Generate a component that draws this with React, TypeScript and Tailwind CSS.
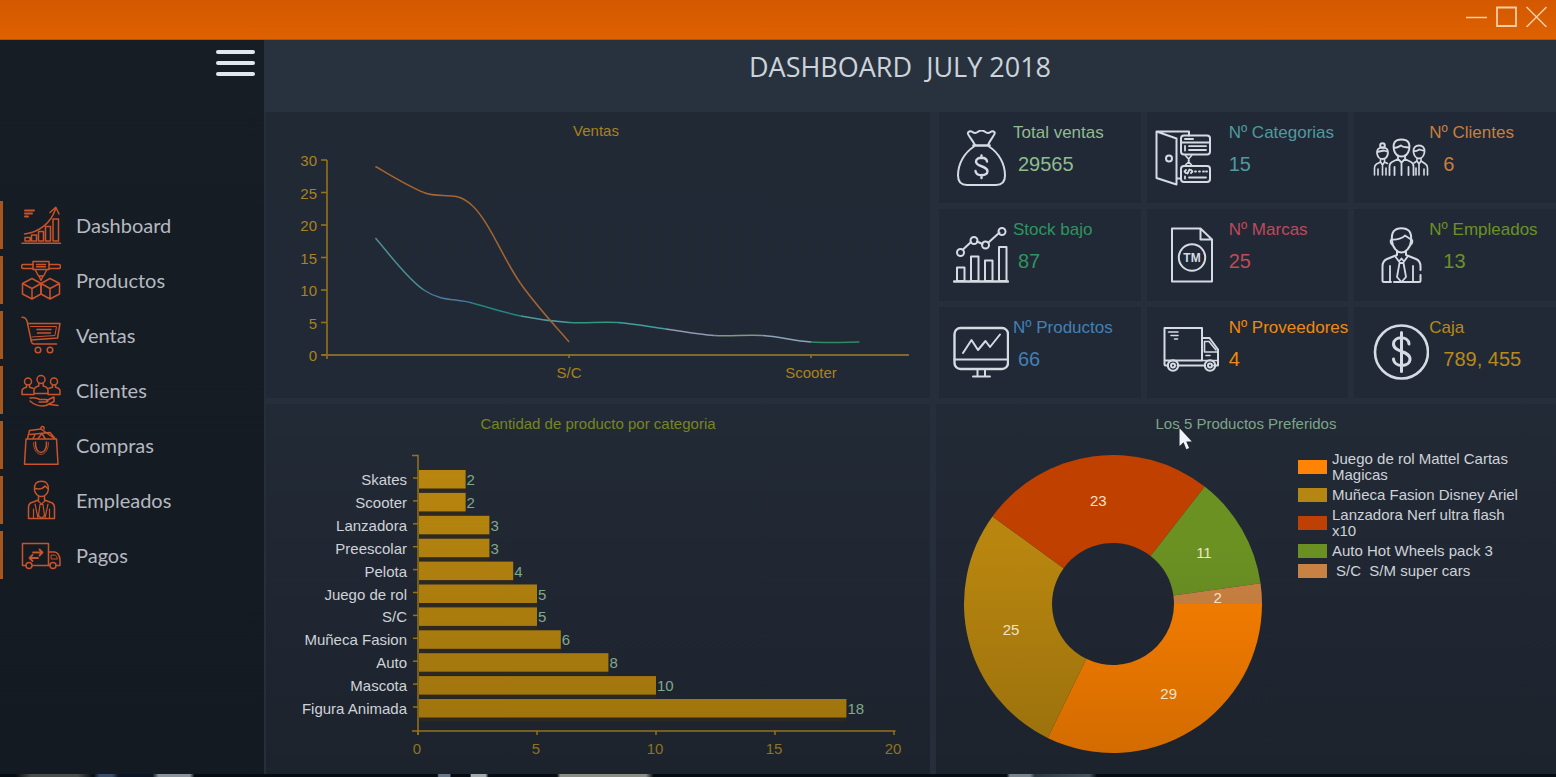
import type { ReactNode } from 'react';

type Point = [number, number];

/* ---------- Sidebar icons ---------- */

function NavIcon({ children }: { children: ReactNode }) {
  return (
    <svg
      viewBox="0 0 40 40"
      className="h-10 w-10 shrink-0"
      fill="none"
      stroke="#c9532a"
      strokeWidth="1.5"
      strokeLinejoin="round"
      strokeLinecap="round"
      aria-hidden="true"
    >
      {children}
    </svg>
  );
}

const navItems: { label: string; icon: ReactNode }[] = [
  {
    label: 'Dashboard',
    icon: (
      <>
        <path d="M1 38.2H40" />
        <path d="M4 36v-3.5h5V36zM10.5 36v-6h5v6zM17.5 36V26.500h5V36zM24.500 36V21.500h5V36zM32 36V14h5.500v22z" />
        <path d="M3.500 29C18 27.500 30 18 34.500 4" />
        <path d="M29 7.500L34.800 2.200L38 9" />
        <path d="M4 5.500h9M4 8.500h7M4 11.500h3" strokeWidth="2" />
      </>
    ),
  },
  {
    label: 'Productos',
    icon: (
      <>
        <path d="M12 4.500H2.500a1.800 1.800 0 0 0 0 4H12M28 4.500h9.500a1.800 1.800 0 0 1 0 4H28" />
        <path d="M12 1.500h16v8H12zM15.500 4.500h9M15.500 6.800h9" />
        <path d="M14 9.500l3.500 6.500h5L26 9.500M18 16l2 4.500l2-4.500" />
        <path d="M1.500 23.500L11 18.500L20 23.500V34L11 39L1.500 34zM1.500 23.500L11 28.500L20 23.500M11 28.500V39" />
        <path d="M38.500 23.500L29 18.500L20 23.500V34L29 39L38.500 34zM38.500 23.500L29 28.500L20 23.500M29 28.500V39" />
      </>
    ),
  },
  {
    label: 'Ventas',
    icon: (
      <>
        <path d="M1 2.200C4 2.200 5 3 6 6L10.500 27C11 28.500 11.500 29 13 29H35.500" />
        <path d="M6.800 8.500H39L36.500 23L10 25" />
        <path d="M9.500 11.500H35.500L34 20.500L11 22" strokeWidth="1" />
        <path d="M16 14.500H30M16.500 18H29.500" strokeWidth="1.600" />
        <circle cx="17" cy="35" r="2.800" />
        <circle cx="29" cy="35" r="2.800" />
      </>
    ),
  },
  {
    label: 'Clientes',
    icon: (
      <>
        <circle cx="20" cy="9.500" r="4" />
        <path d="M17.800 13v3C14 17 13 18 13 20v3.500h14V20c0-2-1-3-4.800-4v-3" />
        <circle cx="7" cy="11.500" r="3.500" />
        <path d="M5.500 14.800v2.500C2 18.300 1 19.300 1 21v3.500h12M8.500 14.800v2.500l3.500 1" />
        <circle cx="33" cy="11.500" r="3.500" />
        <path d="M34.500 14.800v2.500C38 18.300 39 19.300 39 21v3.500H27M31.500 14.800v2.500l-3.500 1" />
        <path d="M9 28c5-.500 7 0 10 1.500h6.500c2 0 2 2.500 0 2.500H18M25.500 30.500L33 27v4.500L25 35.500c-7 1.500-12-1-16-4.500M29 34.500l8 1" />
      </>
    ),
  },
  {
    label: 'Compras',
    icon: (
      <>
        <path d="M5 14H35.500L37 39.200H3.500z" />
        <path d="M14.500 17c-1 14 12 14 11 0" />
        <path d="M12.500 17.500c0 16 15 16 15 0" strokeWidth="0.800" />
        <path d="M6.500 13.500L8.500 5.500L20 4L33.500 13.500M9 9.500l20-2l5 6M20 4c-1-3.500 4-3 3 0" />
        <path d="M12 13.500l2-4M17 13.500l4-5l3 5" />
      </>
    ),
  },
  {
    label: 'Empleados',
    icon: (
      <>
        <path d="M13.500 10C13 4 15.500 1.200 20.500 1.200S27.800 4 27.300 10C26.800 14 23.500 16.500 20.400 16.500S14 14 13.500 10z" />
        <path d="M13.800 8.500C18 9.500 22 8.500 24 6l3 2.800" />
        <path d="M17.500 16v4L9.500 23C7.800 24 7.500 26 7.500 28V38.500H33.500V28c0-2-.5-4-2.200-5L23.500 20v-4" />
        <path d="M16.500 20.500l4 3.500l4-3.500M19 24.500h3l1.500 11l-3 3l-3-3zM12.500 29v9.500M28.500 29v9.500M14 24l3 14M27 24l-3 14" strokeWidth="1.200" />
      </>
    ),
  },
  {
    label: 'Pagos',
    icon: (
      <>
        <path d="M4.500 30.500H1.500V8.500H27.500V30.500H11.500" />
        <path d="M27.500 17h6c3 0 5.500 4 5.500 8v5.500h-3.500M28.500 30.500h-1" />
        <path d="M30.500 20h3c1.500 0 2.500 2 3 4h-6z" strokeWidth="1" />
        <circle cx="8" cy="30.500" r="3" />
        <circle cx="32" cy="30.500" r="3" />
        <path d="M12 17.500h9M18.500 14.500l3 3l-3 3M17 23H8.500M11.500 20l-3 3l3 3" strokeWidth="1.800" />
      </>
    ),
  },
];

/* ---------- Stat icons ---------- */

function StatIcon({ children }: { children: ReactNode }) {
  return (
    <svg
      viewBox="0 0 56 56"
      className="h-14 w-14 shrink-0"
      fill="none"
      stroke="#d5dbe3"
      strokeWidth="2"
      strokeLinejoin="round"
      strokeLinecap="round"
      aria-hidden="true"
    >
      {children}
    </svg>
  );
}

const moneyBag = (
  <>
    <path d="M22 15C19 9.500 16 6.500 15 4C14.500 1.500 17.500 .5 19.500 2C21.500 3.500 23.500 3 25 1.800C27 .2 30 .2 32 1.800C33.500 3 35.500 3.500 37.500 2C39.500 .5 42.500 1.500 41.500 4C40.500 6.500 37.500 9.500 35 15" />
    <path d="M20.500 15.500H36.500" strokeWidth="2.600" />
    <path d="M21 16.500C11 23 5 34 5 45.500C5 52 8 55 14 55H43C49 55 52 52 52 45.500C52 34 46 23 36 16.500" />
    <path d="M34 31.500C33.500 26.500 23 26.500 23 31.800C23 37 34.500 35.500 34.500 41.300C34.500 46.800 23 46.500 22.500 41M28.500 25.500V28M28.500 45V48" strokeWidth="2.400" />
  </>
);

const doorCards = (
  <>
    <path d="M1.500 1.500L21.500 8.500V54.500L1.500 48zM1.500 1.500H34V5.500M21.500 48.500H26" />
    <circle cx="14" cy="28.500" r="3" />
    <rect x="26" y="5.500" width="29" height="19" rx="3" />
    <path d="M26 12.500H55M30 9h8" />
    <path d="M30 16v4.500M34 16.200H51M34 20H51" strokeWidth="1.800" />
    <path d="M30 24.500c1 3 4 3 4 6s-3 2.500-4 5.500M37 24.500c-1 3-3.500 3-3.500 6s2.500 2.500 3.500 5.500" strokeWidth="1.600" />
    <rect x="26" y="36" width="29" height="16" rx="3" />
    <path d="M31 40l-1.500 1.500L31 43M36 40l1.500 1.500L36 43M34.500 39.500l-2 4M40 41.500h1M44 41.500h1M48 41.500h1M51 41.500h1M30 46.500v2M34 47.500H51" strokeWidth="1.800" />
  </>
);

const peopleGroup = (
  <>
    <path d="M21 20C19.500 13 22 9.500 28.500 9.500S37.500 13 36 20C35 24 32 26.500 28.500 26.500S22 24 21 20zM21 17.500C25 18.500 27 15.500 28 15.500C30 18 33 17 36 17.500" />
    <path d="M25 25.500v3.500L19 32C17 33 16.500 34 16.500 36.500V45M32 25.500v3.500L38 32c2 1 2.500 2 2.500 4.500V45M25 29l3.500 3.500L32 29M28.500 32.500V45M21.500 37v8M35.500 37v8" strokeWidth="1.800" />
    <circle cx="9.500" cy="15.500" r="2.300" />
    <path d="M4 23C3.500 19.500 6 17.500 9.500 17.500S15.500 19.500 15 23C14.500 27 12 29 9.500 29S4.500 27 4 23zM4 22l7-1.500l4 1.500" strokeWidth="1.800" />
    <path d="M7.500 29v3L3.500 34C2 35 1.500 36 1.500 38v7M11.500 29v3l3 1.500M7.500 32l2 3l2-3M9.500 35v10M5 39v6M13 38v7" strokeWidth="1.600" />
    <path d="M40.500 22C40 17.500 42.500 15.500 46 15.500S52 17.500 51.500 22C51 26 48.500 28.500 46 28.500S41 26 40.500 22zM40.500 21c4 .5 5-1.500 6-1.500l5 1.500" strokeWidth="1.800" />
    <path d="M44 28.500V31l-3 2M48 28.500V31l4.500 3c1.500 1 2 2 2 4v7M44 31l2 3l2-3M46 34v11M43 38v7M51 39v6" strokeWidth="1.600" />
  </>
);

const barTrend = (
  <>
    <path d="M1 54.500H55" strokeWidth="2.400" />
    <path d="M4 54V40.500h7.500V54zM18 54V29.500h7.500V54zM32 54V33.500h7.500V54zM46 54V20h7.500V54z" />
    <path d="M10 22.500l8-7.500M24 14.500l5.500 2.500M35.500 15.500l11-10" />
    <circle cx="7.500" cy="25.500" r="3.500" />
    <circle cx="21" cy="13.500" r="3.500" />
    <circle cx="32.500" cy="18" r="3.500" />
    <circle cx="49" cy="4.500" r="3.500" />
  </>
);

const trademarkFile = (
  <>
    <path d="M9 1.500H37.500L49 12.500V54.500H9zM37.500 1.500V12.500H49" />
    <circle cx="29" cy="30.500" r="13.200" />
    <text
      x="29"
      y="35"
      textAnchor="middle"
      fill="#d5dbe3"
      stroke="none"
      className="font-['Liberation_Sans',sans-serif] text-[12px] font-bold"
    >
      TM
    </text>
  </>
);

const employee = (
  <>
    <path d="M19 14C18 5 21.500 1.200 28.500 1.200S39 5 38 14C37.500 21 32.500 25.500 28.500 25.500S19.500 21 19 14z" />
    <path d="M19 12.500C24 13 30 11 32 8.500L38 12.500M18.500 12.500c-1.500 1-1 4 .5 5M38.500 12.500c1.500 1 1 4-.5 5" strokeWidth="1.800" />
    <path d="M24 24v4L14 32C10.500 33.500 9.500 36 9.500 39.500V53.500c0 1 .5 1.500 1.500 1.500H18M33 24v4l10 4c3.500 1.500 4.500 4 4.500 7.500V43M47.500 48v5.500c0 1-.5 1.500-1.500 1.500H21" />
    <path d="M22 29l4 5.500l2.500-3l2.500 3l4-5.500M26.500 36h4l2.500 14l-4.500 5l-4.500-5zM17 39v15.500M40 39v15.500" strokeWidth="1.800" />
  </>
);

const monitor = (
  <>
    <rect x="1.500" y="4" width="53.500" height="41" rx="6" strokeWidth="2.400" />
    <path d="M1.500 35.500H55" />
    <path d="M10 29L18.500 16L25 26L32.500 17L37 23L47 10.500" />
    <path d="M24.500 45v6.500M32 45v6.500M20 52.500H37" />
  </>
);

const truck = (
  <>
    <path d="M5 41.500H2.500C1.800 41.500 1.500 41 1.500 40.500V4H39V36.500H1.500M14.500 41.500H42M39 14H46.500L55 25.500V41.500H51" />
    <path d="M41.500 17.500V28H54.500M41.500 17.500h4.500l7 8.500M39 36.500H55M43 31.500h4M5.500 8H15M8 11.500h7M11.500 15h3" strokeWidth="1.600" />
    <circle cx="10" cy="41.500" r="5.200" />
    <circle cx="10" cy="41.500" r="2" />
    <circle cx="47" cy="41.500" r="5.200" />
    <circle cx="47" cy="41.500" r="2" />
  </>
);

const coin = (
  <>
    <circle cx="28.500" cy="28" r="26.500" strokeWidth="2.600" />
    <path d="M36 20C35.500 11.500 20.500 12 20.500 20C20.500 28.500 37 26.500 37 35C37 43.500 21 43.500 20.500 35M28.500 8.500V47.500" strokeWidth="3" />
  </>
);

interface Stat {
  label: string;
  value: string;
  color: string;
  icon: ReactNode;
  pad: string;
  gap: string;
  indent: string;
}

const stats: Stat[] = [
  { label: 'Total ventas', value: '29565', color: 'text-[#8fbc8f]', icon: moneyBag, pad: 'pl-[14px]', gap: 'gap-1', indent: 'pl-[5px]' },
  { label: 'Nº Categorias', value: '15', color: 'text-[#4f9a9f]', icon: doorCards, pad: 'pl-2', gap: 'gap-[18px]', indent: '' },
  { label: 'Nº Clientes', value: '6', color: 'text-[#c87f3d]', icon: peopleGroup, pad: 'pl-[19px]', gap: '', indent: 'pl-[14px]' },
  { label: 'Stock bajo', value: '87', color: 'text-[#2f9460]', icon: barTrend, pad: 'pl-[14px]', gap: 'gap-1', indent: 'pl-[5px]' },
  { label: 'Nº Marcas', value: '25', color: 'text-[#bf4a5a]', icon: trademarkFile, pad: 'pl-4', gap: 'gap-[10px]', indent: '' },
  { label: 'Nº Empleados', value: '13', color: 'text-[#6b9126]', icon: employee, pad: 'pl-[19px]', gap: '', indent: 'pl-[14px]' },
  { label: 'Nº Productos', value: '66', color: 'text-[#4480b4]', icon: monitor, pad: 'pl-[14px]', gap: 'gap-1', indent: 'pl-[5px]' },
  { label: 'Nº Proveedores', value: '4', color: 'text-[#f08a0c]', icon: truck, pad: 'pl-4', gap: 'gap-[10px]', indent: '' },
  { label: 'Caja', value: '789, 455', color: 'text-[#b8891a]', icon: coin, pad: 'pl-[19px]', gap: '', indent: 'pl-[14px]' },
];

function StatTile({ stat }: { stat: Stat }) {
  return (
    <div className={`flex bg-[#212936] ${stat.pad} ${stat.gap}`}>
      <div className="flex items-center">
        <StatIcon>{stat.icon}</StatIcon>
      </div>
      <dl className={`pt-[11px] whitespace-nowrap ${stat.color}`}>
        <dt className="text-[17px] leading-5">{stat.label}</dt>
        <dd className={`mt-[9px] text-[20px] leading-6 ${stat.indent}`}>{stat.value}</dd>
      </dl>
    </div>
  );
}

/* ---------- Line chart ---------- */

const SPLINE = 0.18;

function splineSegments(points: Point[]): string[] {
  return points.slice(0, -1).map((p, i) => {
    const prev = points[i - 1] ?? p;
    const next = points[i + 1];
    const after = points[i + 2] ?? next;
    const c1: Point = [p[0] + (next[0] - prev[0]) * SPLINE, p[1] + (next[1] - prev[1]) * SPLINE];
    const c2: Point = [next[0] - (after[0] - p[0]) * SPLINE, next[1] - (after[1] - p[1]) * SPLINE];
    return `M${p.join(' ')}C${c1.join(' ')} ${c2.join(' ')} ${next.join(' ')}`;
  });
}

const ventasX = (slot: number) => 61 + 48.4 * slot;
const ventasY = (value: number) => 205 - 6.5 * value;
const toPoints = (values: number[]): Point[] => values.map((v, i) => [ventasX(i + 1), ventasY(v)]);

const orangeSeries = splineSegments(toPoints([29, 25, 23, 11, 2]));
const tealSeries = splineSegments(toPoints([18, 10, 8, 6, 5, 5, 4, 3, 3, 2, 2]));
const tealColors = ['#4d8f94', '#4a7a9c', '#23857f', '#4f98a0', '#2f9a80', '#3fa09c', '#8f9ab0', '#7d9a82', '#8aa4b8', '#2f8a66'];

function VentasChart() {
  return (
    <svg viewBox="0 0 664 248" className="block w-full text-[15px]" role="img" aria-label="Ventas">
      <g stroke="#94731a" strokeWidth="1.600" fill="none">
        <path d="M61 10V209" />
        <path d="M56 205H643" stroke="#7d6a2c" strokeWidth="2" />
        {[0, 5, 10, 15, 20, 25, 30].map((v) => (
          <path key={v} d={`M55 ${ventasY(v)}H61`} />
        ))}
        {[5, 10].map((slot) => (
          <path key={slot} d={`M${ventasX(slot)} 205v3`} />
        ))}
      </g>
      <g fill="#a9821c">
        {[0, 5, 10, 15, 20, 25, 30].map((v) => (
          <text key={v} x="51" y={ventasY(v) + 6} textAnchor="end">
            {v}
          </text>
        ))}
        <text x={ventasX(5)} y="228" textAnchor="middle">S/C</text>
        <text x={ventasX(10)} y="228" textAnchor="middle">Scooter</text>
      </g>
      <g fill="none" strokeWidth="1.500">
        {tealSeries.map((d, i) => (
          <path key={d} d={d} stroke={tealColors[i]} />
        ))}
        {orangeSeries.map((d) => (
          <path key={d} d={d} stroke="#a5652f" />
        ))}
      </g>
    </svg>
  );
}

/* ---------- Bar chart ---------- */

const categories: [string, number][] = [
  ['Skates', 2],
  ['Scooter', 2],
  ['Lanzadora', 3],
  ['Preescolar', 3],
  ['Pelota', 4],
  ['Juego de rol', 5],
  ['S/C', 5],
  ['Muñeca Fasion', 6],
  ['Auto', 8],
  ['Mascota', 10],
  ['Figura Animada', 18],
];

const UNIT = 23.8;
const rowY = (i: number) => 36 + 22.9 * i;

function CategoryChart() {
  return (
    <svg viewBox="0 0 664 331" className="block w-full text-[15px]" role="img" aria-label="Cantidad de producto por categoria">
      <defs>
        <linearGradient id="barFill" gradientUnits="userSpaceOnUse" x1="0" y1="26" x2="0" y2="275">
          <stop offset="0" stopColor="#b8860f" />
          <stop offset="1" stopColor="#a0750d" />
        </linearGradient>
      </defs>
      <g stroke="#94731a" strokeWidth="1.500" fill="none">
        <path d="M146 12.500H152V292M146 288H629.500" />
        {[0, 5, 10, 15, 20].map((v) => (
          <path key={v} d={`M${152 + UNIT * v} 288v4`} />
        ))}
        {categories.map(([name], i) => (
          <path key={name} d={`M147 ${rowY(i) - 1}h5`} />
        ))}
      </g>
      {categories.map(([name, value], i) => (
        <g key={name}>
          <text x="141" y={rowY(i) + 6} textAnchor="end" fill="#cfd2d8">
            {name}
          </text>
          <rect x="153" y={rowY(i) - 9} width={UNIT * value - 1} height="22.500" fill="#33291a" fillOpacity="0.7" />
          <rect x="153" y={rowY(i) - 9} width={UNIT * value - 1} height="18.500" fill="url(#barFill)" />
          <text x={153 + UNIT * value} y={rowY(i) + 6} fill="#7fa98a">
            {value}
          </text>
        </g>
      ))}
      <g fill="#8f721f">
        {[0, 5, 10, 15, 20].map((v) => (
          <text key={v} x={151 + UNIT * v} y="311" textAnchor="middle">
            {v}
          </text>
        ))}
      </g>
    </svg>
  );
}

/* ---------- Doughnut chart ---------- */

const favourites = [
  { name: 'Juego de rol Mattel Cartas Magicas', value: 29, fill: '#fb8000', swatch: 'bg-[#ff8406]', indent: '' },
  { name: 'Muñeca Fasion Disney Ariel', value: 25, fill: '#b8860f', swatch: 'bg-[#b58611]', indent: '' },
  { name: 'Lanzadora Nerf ultra flash x10', value: 23, fill: '#c04000', swatch: 'bg-[#bf4004]', indent: '' },
  { name: 'Auto Hot Wheels pack 3', value: 11, fill: '#6b9123', swatch: 'bg-[#6a9023]', indent: '' },
  { name: 'S/C  S/M super cars', value: 2, fill: '#cb8342', swatch: 'bg-[#c78244]', indent: 'pl-1' },
];

const CENTER = 149;
const OUTER = 149;
const INNER = 61;
const totalValue = favourites.reduce((sum, f) => sum + f.value, 0);

const polar = (radius: number, turn: number): Point => [
  CENTER + radius * Math.cos(turn * 2 * Math.PI),
  CENTER + radius * Math.sin(turn * 2 * Math.PI),
];

const slices = favourites.map((f, i) => {
  const start = favourites.slice(0, i).reduce((sum, g) => sum + g.value, 0) / totalValue;
  const end = start + f.value / totalValue;
  return {
    ...f,
    d: `M${polar(OUTER, start).join(' ')}A${OUTER} ${OUTER} 0 0 1 ${polar(OUTER, end).join(' ')}L${polar(INNER, end).join(' ')}A${INNER} ${INNER} 0 0 0 ${polar(INNER, start).join(' ')}Z`,
    label: polar(105, (start + end) / 2),
  };
});

function Doughnut() {
  return (
    <svg viewBox="0 0 298 298" className="block w-[298px] shrink-0 text-[15px]" role="img" aria-label="Los 5 Productos Preferidos">
      <defs>
        <linearGradient id="shade" gradientUnits="userSpaceOnUse" x1="0" y1="0" x2="0" y2="298">
          <stop offset="0.3" stopColor="#000000" stopOpacity="0" />
          <stop offset="1" stopColor="#000000" stopOpacity="0.16" />
        </linearGradient>
      </defs>
      {slices.map((s) => (
        <g key={s.name}>
          <path d={s.d} fill={s.fill} />
          <path d={s.d} fill="url(#shade)" />
        </g>
      ))}
      {slices.map((s) => (
        <text key={s.name} x={s.label[0]} y={s.label[1] + 6} textAnchor="middle" fill="#f0e2ca">
          {s.value}
        </text>
      ))}
    </svg>
  );
}

/* ---------- Page ---------- */

export default function App() {
  return (
    <div className="flex min-h-screen flex-col bg-[#0b0f16] font-['Liberation_Sans',Arial,sans-serif]">
      <div className="flex h-10 items-start justify-end gap-[9px] border-b border-[#a5541c] bg-linear-to-b from-[#d35800] to-[#de6200] pt-[6px] pr-[9px]">
        <button type="button" aria-label="Minimizar" className="h-[21px] w-[21px]">
          <svg viewBox="0 0 21 21" fill="none" stroke="#f7cda6" strokeWidth="1.500"><path d="M0 11.500H21" /></svg>
        </button>
        <button type="button" aria-label="Maximizar" className="h-[21px] w-[21px]">
          <svg viewBox="0 0 21 21" fill="none" stroke="#f7cda6" strokeWidth="1.800"><path d="M1 1.500H20V20H1z" /></svg>
        </button>
        <button type="button" aria-label="Cerrar" className="h-[21px] w-[21px]">
          <svg viewBox="0 0 21 21" fill="none" stroke="#f7cda6" strokeWidth="1.500"><path d="M.5 1L20.500 21M20.500 1L.5 21" /></svg>
        </button>
      </div>

      <div className="flex flex-1">
        <aside className="w-[264px] shrink-0 bg-linear-to-b from-[#171d24] to-[#141a22]">
          <div className="flex justify-end pt-[10px] pr-[9px]">
            <button type="button" aria-label="Menú" className="flex w-[39px] flex-col gap-[7px]">
              <span className="h-1 w-full rounded-full bg-[#e2e7ee]" />
              <span className="h-1 w-full rounded-full bg-[#e2e7ee]" />
              <span className="h-1 w-full rounded-full bg-[#e2e7ee]" />
            </button>
          </div>
          <nav className="mt-[125px] flex flex-col gap-[7px] font-['Lato',sans-serif] text-[20px] text-[#b5b9c0]">
            {navItems.map((item) => (
              <a key={item.label} href="#" className="flex h-12 items-center gap-[15px] border-l-3 border-[#a4581f] pl-[18px]">
                <NavIcon>{item.icon}</NavIcon>
                {item.label}
              </a>
            ))}
          </nav>
        </aside>

        <main className="flex flex-1 flex-col bg-[#272e3b]">
          <header className="flex h-[72px] items-center justify-center bg-[#28323e] pb-[18px]">
            <h1 className="pr-5 font-['Open_Sans',sans-serif] text-[27px] leading-9 whitespace-pre text-[#cdd3da]">DASHBOARD  JULY 2018</h1>
          </header>

          <div className="grid flex-1 grid-cols-[664fr_620fr] content-start gap-[6px] pl-[2px]">
            <section className="bg-linear-to-b from-[#212935] to-[#222936]">
              <h2 className="pt-[9px] pr-1 pb-[9px] text-center text-[15px] leading-5 text-[#a9821c]">Ventas</h2>
              <VentasChart />
            </section>

            <div className="ml-[3px] grid grid-cols-3 gap-[6px]">
              {stats.map((stat) => (
                <StatTile key={stat.label} stat={stat} />
              ))}
            </div>

            <section className="bg-linear-to-b from-[#222a36] to-[#1d232d]">
              <h2 className="pt-[10px] pb-[9px] text-center text-[15px] leading-5 text-[#78861f]">Cantidad de producto por categoria</h2>
              <CategoryChart />
            </section>

            <section className="relative bg-linear-to-b from-[#222a36] to-[#1d232d]">
              <h2 className="pt-[10px] pb-[17px] text-center text-[15px] leading-5 text-[#7da588]">Los 5 Productos Preferidos</h2>
              <div className="flex items-start gap-9 pl-7">
                <div className="pt-1">
                  <Doughnut />
                </div>
                <ul className="flex w-[225px] flex-col gap-1 text-[15px] leading-4 text-[#cfd2d8]">
                  {favourites.map((f) => (
                    <li key={f.name} className="flex items-center gap-[5px]">
                      <span className={`h-[14px] w-[29px] shrink-0 ${f.swatch}`} />
                      <span className={`whitespace-pre-wrap ${f.indent}`}>{f.name}</span>
                    </li>
                  ))}
                </ul>
              </div>
              <svg viewBox="0 0 12 20" className="absolute top-[24px] left-[243px] h-[22px] w-[13px]" fill="#f1f4f8" aria-hidden="true">
                <path d="M.5 0V16.500L4.200 13L6.800 19.500L9.300 18.400L6.700 12.300H11.800z" />
              </svg>
            </section>
          </div>
        </main>
      </div>

      <div className="h-[3px] bg-[linear-gradient(90deg,#070b12_1%,#4b4d4a_2%,#4b4d4a_5%,#070b12_6%,#3a4d66_6.4%,#3a4d66_7.2%,#0a1626_7.6%,#0a1626_9.8%,#8a929c_10.2%,#8a929c_12.2%,#070b12_12.5%,#070b12_28.100%,#67778a_28.200%,#67778a_28.900%,#070b12_29%,#070b12_30.200%,#a3a9ab_30.300%,#a3a9ab_31.200%,#070b12_31.400%,#070b12_35.800%,#8b8d85_36%,#8b8d85_41.500%,#070b12_42%,#070b12_64.700%,#75838f_64.900%,#75838f_66.200%,#2c3844_66.500%,#46535f_70%,#070b12_70.500%)]" />
    </div>
  );
}
